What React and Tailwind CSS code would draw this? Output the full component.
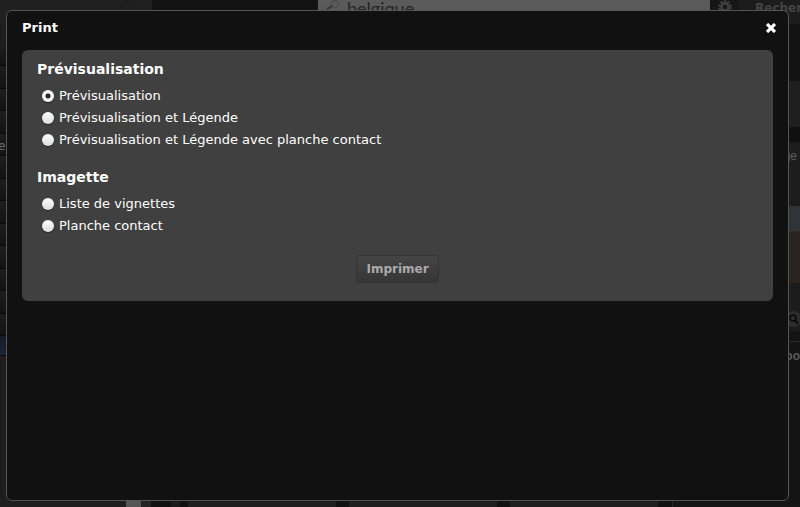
import React from "react";

const groups = [
  {
    title: "Prévisualisation",
    options: [
      { id: "preview", label: "Prévisualisation" },
      { id: "preview-caption", label: "Prévisualisation et Légende" },
      { id: "preview-caption-contact", label: "Prévisualisation et Légende avec planche contact" },
    ],
  },
  {
    title: "Imagette",
    options: [
      { id: "thumbnail-list", label: "Liste de vignettes" },
      { id: "contact-sheet", label: "Planche contact" },
    ],
  },
];

function Gear() {
  return (
    <svg className="size-4" viewBox="0 0 16 16" fill="none" stroke="#3f3f3f" aria-hidden="true">
      <circle cx="8" cy="7" r="3.6" strokeWidth="2.6" />
      <circle cx="8" cy="7" r="5.8" strokeWidth="2.2" strokeDasharray="2.2 1.444" />
    </svg>
  );
}

function TopBar() {
  return (
    <header className="flex h-6 shrink-0 bg-[#1a1a1a]">
      <div className="flex w-[152px] shrink-0 justify-end bg-[#202020] pr-5">
        <span className="mt-px size-3 rounded-full border border-[#191919]" />
      </div>
      <div className="w-[166px] shrink-0 bg-[#121212]" />
      <div className="flex min-w-0 flex-1 items-start gap-[5px] bg-[#5a5a5a] pl-2 text-[#252525]">
        <svg className="size-4 shrink-0" viewBox="0 0 16 16" fill="none" stroke="#484848" aria-hidden="true">
          <circle cx="9" cy="4" r="3.5" />
          <path d="M6 6L1 9" stroke="#333" strokeWidth="2" />
        </svg>
        <span className="font-['Lato',sans-serif] text-lg leading-4">belgique</span>
      </div>
      <div className="flex w-[29px] shrink-0 justify-center bg-[#161616]">
        <Gear />
      </div>
      <div className="w-[61px] shrink-0 bg-[#1c1c1c] pl-4 text-xs leading-4 font-bold text-[#444]">Recher</div>
    </header>
  );
}

function LeftRail() {
  return (
    <aside className="w-[152px] shrink-0 bg-[#1e1e1e]">
      <div className="h-5" />
      {Array.from({ length: 13 }, (_, i) => (
        <div
          key={i}
          className="h-[22px] border-b border-[#080808] bg-linear-to-b from-[#1e1e1e] to-[#131313] text-xs leading-6 text-[#707070] odd:h-[23px]"
        >
          {i === 4 ? <span className="-ml-[2px]">e</span> : null}
        </div>
      ))}
      <div className="h-[20px] border-b border-[#080808] bg-linear-to-b from-[#141b26] to-[#1b2535]" />
    </aside>
  );
}

function RightRail() {
  return (
    <aside className="flex w-3 shrink-0 flex-col bg-[#141414] font-['Liberation_Sans',Arial,sans-serif]">
      <div className="h-[57px] shrink-0 bg-[#121212]" />
      <div className="h-[46px] shrink-0 bg-[#1f1f1f]" />
      <div className="h-[15px] shrink-0 bg-[#101010]" />
      <div className="flex h-16 shrink-0 justify-end bg-[#1d1d1d] pt-1 pr-[3px] text-xs leading-5 text-[#5c5c5c]">ge</div>
      <div className="h-[25px] shrink-0 bg-[#303438]" />
      <div className="h-[52px] shrink-0 border-t border-[#332a26] bg-[#2a2421]" />
      <div className="flex h-12 shrink-0 items-end bg-[#1c1c1c] pb-1">
        <svg className="h-4 w-3" viewBox="0 0 12 16" fill="none" stroke="#090909" strokeWidth="2" aria-hidden="true">
          <circle cx="5" cy="8" r="8" fill="#2d2d2d" stroke="none" />
          <circle cx="5" cy="7" r="3" strokeWidth="1.5" />
          <path d="M7 9.5l3 3" />
        </svg>
      </div>
      <div className="h-[11px] shrink-0 border-b border-[#2a2a2a]" />
      <div className="flex justify-end text-xs leading-7 font-bold text-[#5c5c5c]">oo</div>
    </aside>
  );
}

function BottomStrip() {
  return (
    <footer className="flex h-2 shrink-0 bg-[#1f1f1f]">
      <div className="w-[126px] shrink-0" />
      <div className="w-[15px] shrink-0 bg-[#555]" />
      <div className="w-[10px] shrink-0 bg-[#242424]" />
      <div className="w-5 shrink-0 bg-[#111]" />
      <div className="w-[9px] shrink-0 bg-[#1c1c1c]" />
      <div className="w-2 shrink-0 bg-[#111]" />
      <div className="flex-1" />
      <div className="w-[13px] shrink-0 bg-[#111]" />
      <div className="flex-1" />
      <div className="w-[13px] shrink-0 bg-[#111]" />
      <div className="flex-1" />
      <div className="w-[15px] shrink-0 border-r border-[#2a2a2a] bg-[#111]" />
      <div className="w-[127px] shrink-0 bg-[#151515]" />
    </footer>
  );
}

function OptionGroup({ title, options }) {
  return (
    <fieldset>
      <legend className="mb-[7px] text-sm leading-5 font-bold">{title}</legend>
      <div className="flex flex-col gap-[2px] pl-[5px]">
        {options.map((option) => (
          <label key={option.id} htmlFor={option.id} className="flex items-center gap-[5px] text-[13px] leading-5">
            <input
              id={option.id}
              type="radio"
              name="layout"
              value={option.id}
              defaultChecked={option.id === "preview"}
              className="size-3 shrink-0 appearance-none rounded-full bg-linear-to-b from-white to-[#dcdcdc] shadow-[0_1px_1px_#222] checked:bg-[radial-gradient(circle,#222_0_2px,#f4f4f4_3px)]"
            />
            {option.label}
          </label>
        ))}
      </div>
    </fieldset>
  );
}

function PrintDialog() {
  return (
    <section
      role="dialog"
      aria-labelledby="print-title"
      className="fixed inset-x-[6px] top-[10px] bottom-[6px] mr-[5px] rounded-md border border-[#555] bg-[#111] px-[15px] text-white"
    >
      <header className="flex h-[39px] items-start justify-between pt-[7px]">
        <h1 id="print-title" className="text-[13px] leading-5 font-bold">
          Print
        </h1>
        <button type="button" aria-label="Fermer" className="-mr-2 flex size-5 items-center justify-center">
          <svg className="size-[10px]" viewBox="0 0 10 10" stroke="currentColor" strokeWidth="3.2" aria-hidden="true">
            <path d="M1 1l8 8M9 1l-8 8" />
          </svg>
        </button>
      </header>
      <form className="rounded-md bg-[#404040] px-[15px] pt-[9px] pb-[18px]" onSubmit={(e) => e.preventDefault()}>
        <div className="flex flex-col gap-[17px]">
          {groups.map((group) => (
            <OptionGroup key={group.title} {...group} />
          ))}
        </div>
        <div className="mt-[19px] flex justify-center">
          <button
            type="submit"
            className="h-7 rounded-[3px] border border-[#343434] bg-linear-to-b from-[#454545] to-[#363636] px-[9px] text-xs leading-5 font-bold text-[#aaa]"
          >
            Imprimer
          </button>
        </div>
      </form>
    </section>
  );
}

export default function App() {
  return (
    <div className="flex h-screen flex-col overflow-hidden bg-[#161616] font-['DejaVu_Sans',Verdana,sans-serif]">
      <TopBar />
      <main className="flex min-h-0 flex-1">
        <LeftRail />
        <div className="flex-1" />
        <RightRail />
      </main>
      <BottomStrip />
      <PrintDialog />
    </div>
  );
}
